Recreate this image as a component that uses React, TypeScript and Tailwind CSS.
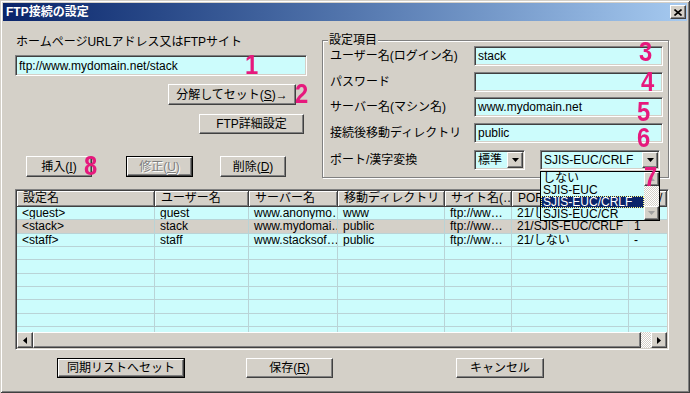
import React from "react";

const RAISED =
  "bg-[#d4d0c8] border border-t-white border-l-white border-r-[#404040] border-b-[#404040] shadow-[inset_-1px_-1px_0_#808080]";
const SUNKEN =
  "border border-t-[#808080] border-l-[#808080] border-r-white border-b-white shadow-[inset_1px_1px_0_#404040,inset_-1px_-1px_0_#d4d0c8]";
const CYAN = "bg-[#ccfcfc]";
const DITHER =
  "bg-[image:repeating-conic-gradient(#ffffff_0%_25%,#d4d0c8_0%_50%)] bg-[length:2px_2px]";

function U({ children }: { children: React.ReactNode }) {
  return <span className="underline underline-offset-[1px]">{children}</span>;
}

function Btn({
  className,
  children,
  def = false,
  disabled = false,
}: {
  className: string;
  children: React.ReactNode;
  def?: boolean;
  disabled?: boolean;
}) {
  const txt = disabled
    ? "text-[#808080] [text-shadow:1px_1px_0_#ffffff]"
    : "text-black";
  const inner = (
    <div
      className={`${RAISED} w-full h-full flex items-center justify-center text-[12px] leading-[14px] whitespace-nowrap ${txt}`}
    >
      {children}
    </div>
  );
  if (def) {
    return <div className={`${className} border border-black`}>{inner}</div>;
  }
  return <div className={className}>{inner}</div>;
}

function TextBox({ className, value }: { className: string; value: string }) {
  return (
    <div
      className={`${SUNKEN} ${CYAN} ${className} flex items-center pl-[3px] text-[12px] leading-[14px] overflow-hidden whitespace-nowrap`}
    >
      {value}
    </div>
  );
}

function DownArrow({ color = "#000" }: { color?: string }) {
  return (
    <svg width="7" height="4" viewBox="0 0 7 4">
      <path d="M0 0h7L3.5 4z" fill={color} />
    </svg>
  );
}

function Select({
  className,
  value,
  children,
}: {
  className: string;
  value: string;
  children?: React.ReactNode;
}) {
  return (
    <div
      className={`relative ${SUNKEN} ${CYAN} ${className} flex items-center p-[1px]`}
    >
      <span className="flex-1 pl-[2px] text-[12px] leading-[16px] whitespace-nowrap overflow-hidden">
        {value}
      </span>
      <div
        className={`${RAISED} w-[16px] h-[16px] flex items-center justify-center`}
      >
        <DownArrow />
      </div>
      {children}
    </div>
  );
}

function FormRow({
  label,
  className,
  children,
}: {
  label: string;
  className: string;
  children: React.ReactNode;
}) {
  return (
    <div className={`flex items-center h-[20px] ${className}`}>
      <div className="w-[144px] text-[12px] leading-[14px] whitespace-nowrap">
        {label}
      </div>
      {children}
    </div>
  );
}

const COLS = [
  "w-[138px]",
  "w-[94px]",
  "w-[89px]",
  "w-[107px]",
  "w-[67px]",
  "w-[117px]",
  "flex-1",
];
const HEAD = [
  "設定名",
  "ユーザー名",
  "サーバー名",
  "移動ディレクトリ",
  "サイト名(…",
  "PORT/漢字変換",
  "同期/",
];
const ROWS: string[][] = [
  ["<guest>", "guest", "www.anonymo…", "www", "ftp://ww…", "21/しない", ""],
  ["<stack>", "stack", "www.mydomai…", "public", "ftp://ww…", "21/SJIS-EUC/CRLF", "1"],
  ["<staff>", "staff", "www.stacksof…", "public", "ftp://ww…", "21/しない", "-"],
  ["", "", "", "", "", "", ""],
  ["", "", "", "", "", "", ""],
  ["", "", "", "", "", "", ""],
  ["", "", "", "", "", "", ""],
  ["", "", "", "", "", "", ""],
  ["", "", "", "", "", "", ""],
  ["", "", "", "", "", "", ""],
];

function Num({ n, className }: { n: string; className: string }) {
  return (
    <span
      className={`absolute ${className} text-[#e6197d] font-bold text-[28px] leading-none scale-x-85 origin-top-left [font-family:'Liberation_Sans',sans-serif] pointer-events-none`}
    >
      {n}
    </span>
  );
}

export default function App() {
  return (
    <div className="relative w-[690px] h-[393px] bg-[#d4d0c8] overflow-hidden p-[3px] flex flex-col text-black [font-family:'Liberation_Sans','Noto_Sans_CJK_JP',sans-serif] shadow-[inset_1px_1px_0_#d4d0c8,inset_-1px_-1px_0_#404040,inset_2px_2px_0_#ffffff,inset_-2px_-2px_0_#808080]">
      {/* Title bar */}
      <div className="h-[18px] flex items-center justify-between pl-[3px] pr-[1px] bg-linear-to-r from-[#0a246a] to-[#a6caf0]">
        <span className="text-white font-bold text-[12px] leading-[14px]">
          FTP接続の設定
        </span>
        <div
          className={`${RAISED} w-[16px] h-[14px] flex items-center justify-center`}
        >
          <svg width="8" height="7" viewBox="0 0 8 7">
            <path
              d="M0.5 0.5L7.5 6.5M7.5 0.5L0.5 6.5"
              stroke="#000"
              strokeWidth="1.6"
            />
          </svg>
        </div>
      </div>

      {/* Body */}
      <div className="flex-1 flex flex-col pl-[12px] pr-[18px]">
        {/* Top section */}
        <div className="flex h-[157px]">
          {/* Left column */}
          <div className="w-[293px] flex flex-col">
            <div className="mt-[14px] h-[14px] text-[12px] leading-[14px] whitespace-nowrap pl-[1px]">
              ホームページURLアドレス又はFTPサイト
            </div>
            <TextBox
              className="mt-[6px] h-[21px] w-[292px]"
              value="ftp://www.mydomain.net/stack"
            />
            <div className="flex justify-end pr-[12px] mt-[8px]">
              <Btn className="w-[128px] h-[21px]">
                分解してセット(<U>S</U>)→
              </Btn>
            </div>
            <div className="flex justify-end pr-[4px] mt-[9px]">
              <Btn className="w-[105px] h-[20px]">FTP詳細設定</Btn>
            </div>
            <div className="flex mt-[22px]">
              <Btn className="ml-[11px] w-[66px] h-[21px]">
                挿入(<U>I</U>)
              </Btn>
              <Btn className="ml-[34px] w-[67px] h-[21px]" def disabled>
                修正(<U>U</U>)
              </Btn>
              <Btn className="ml-[27px] w-[66px] h-[21px]">
                削除(<U>D</U>)
              </Btn>
            </div>
          </div>

          {/* Group box */}
          <div className="ml-[14px] mt-[19px] w-[347px] h-[138px] border border-[#808080] shadow-[inset_1px_1px_0_#ffffff,1px_1px_0_#ffffff] flex flex-col pl-[7px] pr-[5px]">
            <div className="self-start -ml-[2px] -mt-[7px] px-[1px] bg-[#d4d0c8] h-[12px] text-[12px] leading-[12px]">
              設定項目
            </div>
            <FormRow label="ユーザー名(ログイン名)" className="mt-0">
              <TextBox className="w-[189px] h-[20px]" value="stack" />
            </FormRow>
            <FormRow label="パスワード" className="mt-[6px]">
              <TextBox className="w-[189px] h-[20px]" value="" />
            </FormRow>
            <FormRow label="サーバー名(マシン名)" className="mt-[5px]">
              <TextBox className="w-[189px] h-[20px]" value="www.mydomain.net" />
            </FormRow>
            <FormRow label="接続後移動ディレクトリ" className="mt-[6px]">
              <TextBox className="w-[189px] h-[20px]" value="public" />
            </FormRow>
            <FormRow label="ポート/漢字変換" className="mt-[7px]">
              <Select className="w-[51px] h-[20px]" value="標準" />
              <Select className="ml-[15px] w-[120px] h-[20px]" value="SJIS-EUC/CRLF">
                <div className={`absolute left-[-1px] top-[20px] w-[120px] h-[50px] z-10 border border-black ${CYAN} flex`}>
                  <div className="flex-1 flex flex-col text-[12px] leading-[12px]">
                    <div className="h-[12px] pl-[2px]">しない</div>
                    <div className="h-[12px] pl-[2px]">SJIS-EUC</div>
                    <div className="h-[12px] pl-[2px] bg-[#0a246a] text-white outline-1 outline-dotted outline-[#ffff80] -outline-offset-1">
                      SJIS-EUC/CRLF
                    </div>
                    <div className="h-[12px] pl-[2px]">SJIS-EUC/CR</div>
                  </div>
                  <div className="w-[15px] flex flex-col">
                    <div className={`${RAISED} h-[14px] flex items-center justify-center`}>
                      <svg width="7" height="4" viewBox="0 0 7 4">
                        <path d="M0 4h7L3.5 0z" fill="#a0a0a0" />
                      </svg>
                    </div>
                    <div className={`flex-1 ${DITHER}`} />
                    <div className={`${RAISED} h-[14px] flex items-center justify-center`}>
                      <DownArrow color="#a0a0a0" />
                    </div>
                  </div>
                </div>
              </Select>
            </FormRow>
          </div>
        </div>

        {/* Table */}
        <div className={`mt-[11px] h-[161px] ${SUNKEN} p-[1px] flex flex-col`}>
          <div className="flex h-[16px] bg-[#d4d0c8]">
            {HEAD.map((h, i) => (
              <div
                key={i}
                className={`${COLS[i]} h-[16px] border-r border-b border-r-[#404040] border-b-[#404040] shadow-[inset_1px_1px_0_#ffffff,inset_-1px_-1px_0_#808080] pl-[6px] text-[12px] leading-[15px] whitespace-nowrap overflow-hidden`}
              >
                {h}
              </div>
            ))}
          </div>
          <div className={`flex-1 overflow-hidden ${CYAN}`}>
            {ROWS.map((r, ri) => (
              <div
                key={ri}
                className={`flex h-[13.33px] border-b border-b-[#b9d3d6] ${
                  ri === 1 ? "bg-[#d4d0c8]" : ""
                }`}
              >
                {r.map((c, ci) => (
                  <div
                    key={ci}
                    className={`${COLS[ci]} ${
                      ci < 6 ? "border-r border-r-[#b9d3d6]" : ""
                    } pl-[5px] text-[12px] leading-[13px] whitespace-nowrap overflow-hidden`}
                  >
                    {c}
                  </div>
                ))}
              </div>
            ))}
          </div>
          <div className="flex h-[16px]">
            <div className={`${RAISED} w-[16px] h-[16px] flex items-center justify-center`}>
              <svg width="4" height="7" viewBox="0 0 4 7">
                <path d="M4 0v7L0 3.5z" fill="#000" />
              </svg>
            </div>
            <div className={`${RAISED} w-[608px] h-[16px]`} />
            <div className={`w-[10px] h-[16px] ${DITHER}`} />
            <div className={`${RAISED} w-[16px] h-[16px] flex items-center justify-center`}>
              <svg width="4" height="7" viewBox="0 0 4 7">
                <path d="M0 0v7L4 3.5z" fill="#000" />
              </svg>
            </div>
          </div>
        </div>

        {/* Bottom buttons */}
        <div className="flex mt-[8px]">
          <Btn className="ml-[42px] w-[128px] h-[20px]" def>
            同期リストへセット
          </Btn>
          <Btn className="ml-[61px] w-[87px] h-[20px]">
            保存(<U>R</U>)
          </Btn>
          <Btn className="ml-[123px] w-[88px] h-[20px]">キャンセル</Btn>
        </div>
      </div>

      {/* Annotation numbers */}
      <Num n="1" className="left-[245px] top-[51px]" />
      <Num n="2" className="left-[295px] top-[80px]" />
      <Num n="3" className="left-[639px] top-[38px]" />
      <Num n="4" className="left-[641px] top-[68px]" />
      <Num n="5" className="left-[637px] top-[98px]" />
      <Num n="6" className="left-[637px] top-[124px]" />
      <Num n="7" className="left-[644px] top-[163px] z-20" />
      <Num n="8" className="left-[84px] top-[152px]" />
    </div>
  );
}
